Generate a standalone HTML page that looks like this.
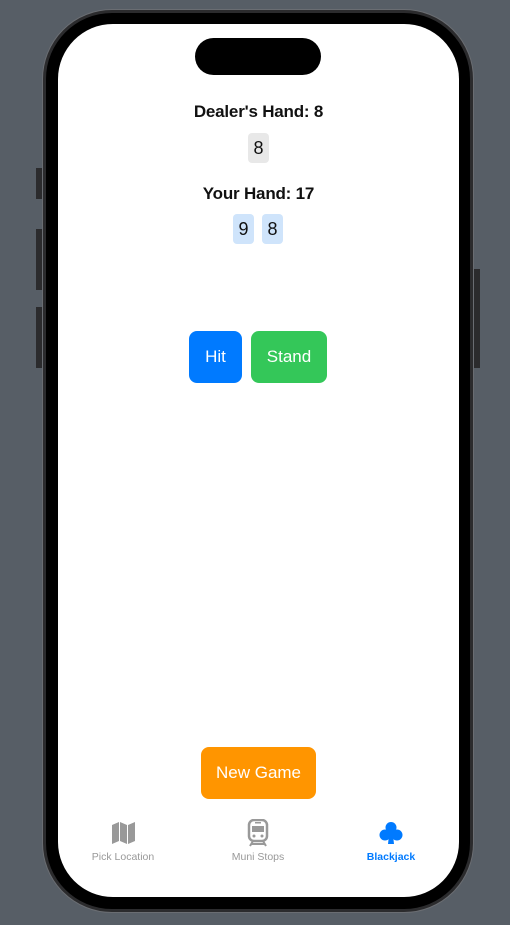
<!DOCTYPE html>
<html><head><style>
*{margin:0;padding:0;box-sizing:border-box}
body{width:510px;height:925px;background:#575e66;position:relative;overflow:hidden;font-family:"Liberation Sans",sans-serif}
.frame{position:absolute;left:42px;top:9px;width:432px;height:904px;border-radius:70px;background:#2b2b2d;border:1px solid #6a6d72}
.bezel{position:absolute;left:46px;top:13px;width:424px;height:896px;border-radius:66px;background:#000}
.screen{position:absolute;left:58px;top:24px;width:401px;height:873px;border-radius:55px;background:#fff;overflow:hidden}
.btn{position:absolute;background:#2b2b2d}
.island{position:absolute;left:137px;top:14px;width:126px;height:37px;border-radius:19px;background:#000}
.t{position:absolute;left:0;width:401px;text-align:center;font-weight:bold;font-size:17px;color:#111;letter-spacing:-0.2px}
.card{position:absolute;width:21px;height:30px;border-radius:4px;font-size:18px;text-align:center;line-height:30px;color:#111}
.b{position:absolute;border-radius:8px;color:#fff;font-size:17px;text-align:center;line-height:52px;height:52px}
.lab{position:absolute;font-size:10.5px;text-align:center;width:100px;color:#999}
</style></head><body>
<div class="btn" style="left:36px;top:168px;width:6px;height:31px"></div>
<div class="btn" style="left:36px;top:229px;width:6px;height:61px"></div>
<div class="btn" style="left:36px;top:307px;width:6px;height:61px"></div>
<div class="btn" style="left:474px;top:269px;width:6px;height:99px"></div>
<div class="frame"></div><div class="bezel"></div>
<div class="screen">
<div class="island"></div>
<div class="t" style="top:78px">Dealer's Hand: 8</div>
<div class="card" style="left:190px;top:109px;background:#e8e8e8">8</div>
<div class="t" style="top:160px">Your Hand: 17</div>
<div class="card" style="left:175px;top:190px;background:#cfe4fb">9</div>
<div class="card" style="left:204px;top:190px;background:#cfe4fb">8</div>
<div class="b" style="left:131px;top:307px;width:53px;background:#007aff">Hit</div>
<div class="b" style="left:193px;top:307px;width:76px;background:#34c759">Stand</div>
<div class="b" style="left:143px;top:723px;width:115px;background:#ff9500">New Game</div>
<svg style="position:absolute;left:53px;top:797px" width="25" height="24" viewBox="0 0 25 24"><path d="M1 4l7-3v19l-7 3zM9 1l7 3v19l-7-3zM17 4l7-3v19l-7 3z" fill="#999"/></svg>
<svg style="position:absolute;left:189px;top:795px" width="22" height="28" viewBox="0 0 22 28"><rect x="2" y="1" width="18" height="21" rx="5" fill="none" stroke="#999" stroke-width="2.5"/><rect x="5" y="7" width="12" height="6" fill="#999"/><rect x="8" y="3" width="6" height="1.5" fill="#999"/><circle cx="7" cy="17" r="1.5" fill="#999"/><circle cx="15" cy="17" r="1.5" fill="#999"/><path d="M6 22l-3 5M16 22l3 5M4 25h14" stroke="#999" stroke-width="2"/></svg>
<svg style="position:absolute;left:321px;top:797px" width="24" height="24" viewBox="0 0 24 24"><circle cx="12" cy="6.5" r="5.5" fill="#007aff"/><circle cx="6" cy="14" r="5.5" fill="#007aff"/><circle cx="18" cy="14" r="5.5" fill="#007aff"/><path d="M10.5 10h3l1.5 13h-6z" fill="#007aff"/></svg>
<div class="lab" style="left:15px;top:827px">Pick Location</div>
<div class="lab" style="left:150px;top:827px">Muni Stops</div>
<div class="lab" style="left:283px;top:827px;color:#007aff;font-weight:bold">Blackjack</div>
</div>
</body></html>
